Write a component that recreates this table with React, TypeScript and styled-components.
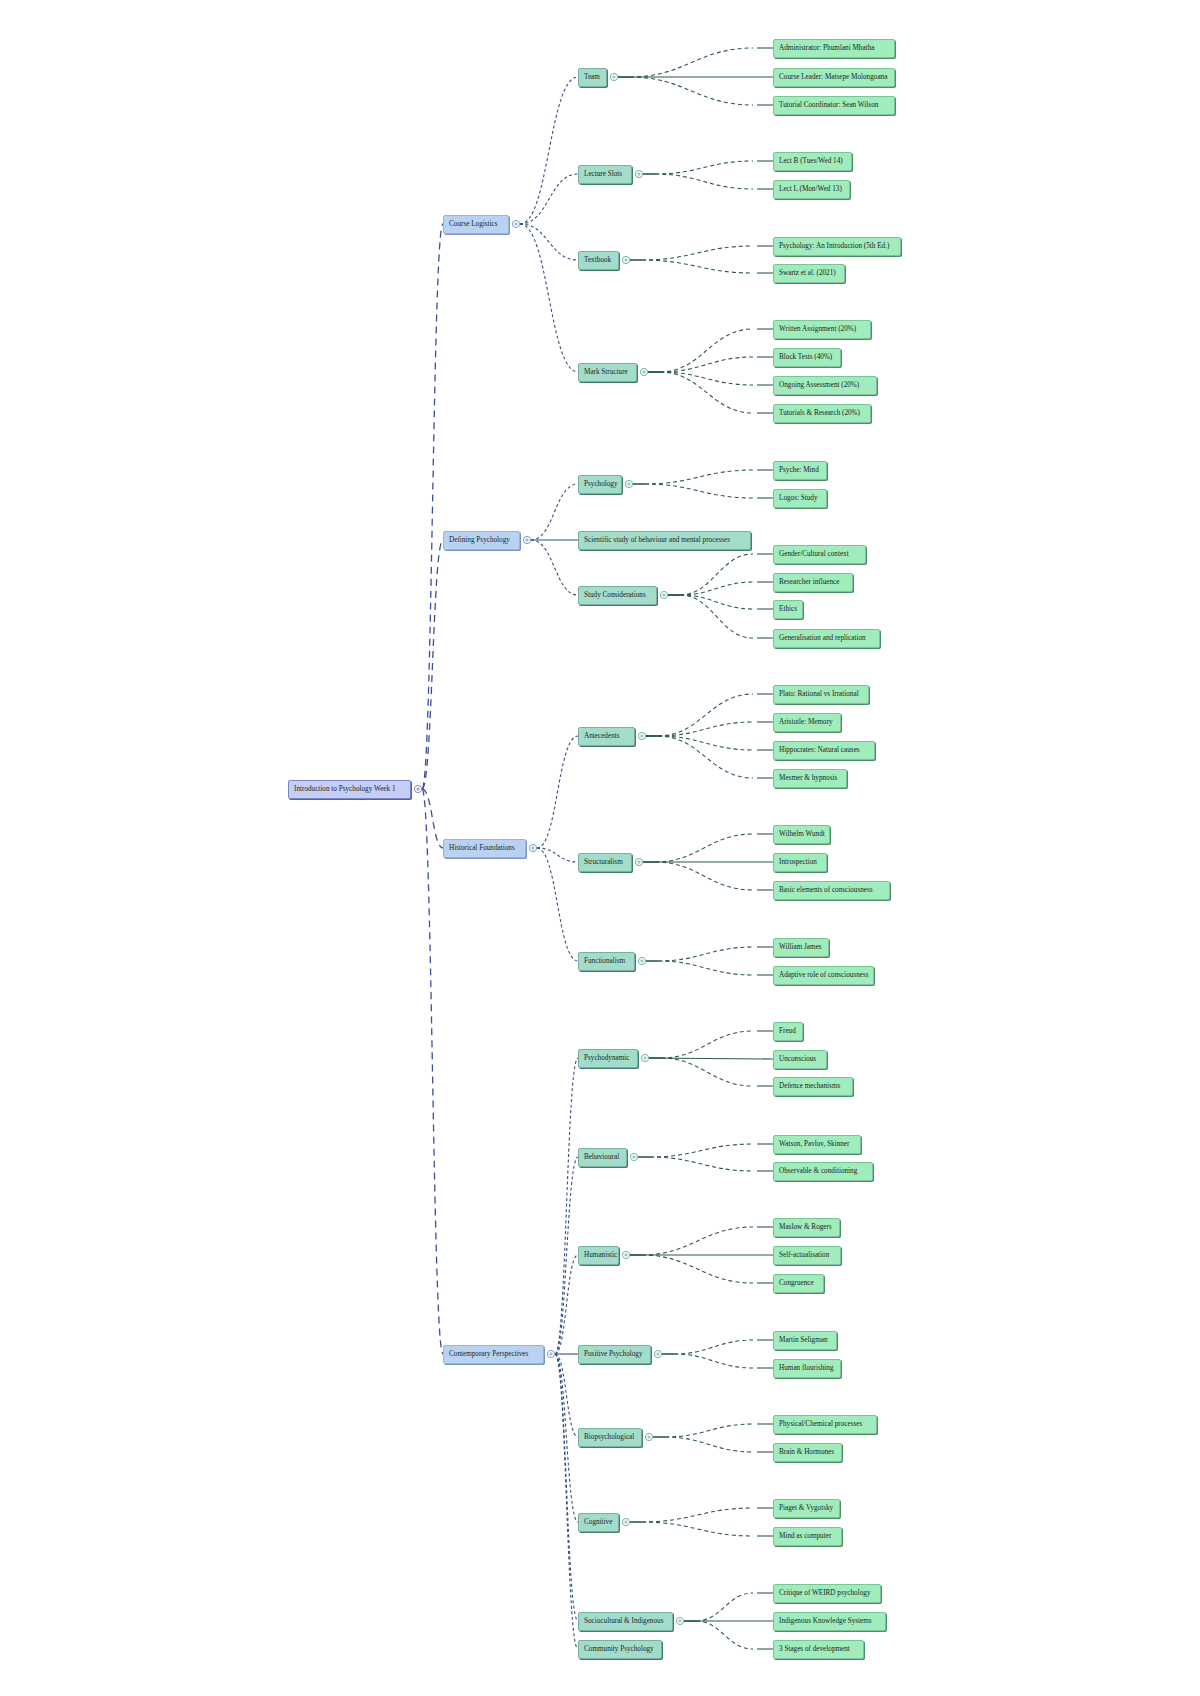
import React from "react";
import styled, { createGlobalStyle } from "styled-components";

// mind map: Introduction to Psychology, week 1

type MapNode = { label: string; cy: number; w: number; children?: MapNode[] };

const leaf = (label: string, cy: number, w: number): MapNode => ({ label, cy, w });

const tree: MapNode = {
  label: "Introduction to Psychology Week 1",
  cy: 789,
  w: 123,
  children: [
    {
      label: "Course Logistics",
      cy: 224,
      w: 66,
      children: [
        {
          label: "Team",
          cy: 77,
          w: 29,
          children: [
            leaf("Administrator: Phumlani Mbatha", 48, 122),
            leaf("Course Leader: Matsepe Molongoana", 77, 122),
            leaf("Tutorial Coordinator: Sean Wilson", 105, 122),
          ],
        },
        {
          label: "Lecture Slots",
          cy: 174,
          w: 54,
          children: [leaf("Lect B (Tues/Wed 14)", 161, 79), leaf("Lect L (Mon/Wed 13)", 189, 77)],
        },
        {
          label: "Textbook",
          cy: 260,
          w: 41,
          children: [
            leaf("Psychology: An Introduction (5th Ed.)", 246, 128),
            leaf("Swartz et al. (2021)", 273, 72),
          ],
        },
        {
          label: "Mark Structure",
          cy: 372,
          w: 59,
          children: [
            leaf("Written Assignment (20%)", 329, 98),
            leaf("Block Tests (40%)", 357, 68),
            leaf("Ongoing Assessment (20%)", 385, 104),
            leaf("Tutorials & Research (20%)", 413, 98),
          ],
        },
      ],
    },
    {
      label: "Defining Psychology",
      cy: 540,
      w: 77,
      children: [
        {
          label: "Psychology",
          cy: 484,
          w: 44,
          children: [leaf("Psyche: Mind", 470, 54), leaf("Logos: Study", 498, 54)],
        },
        leaf("Scientific study of behaviour and mental processes", 540, 173),
        {
          label: "Study Considerations",
          cy: 595,
          w: 79,
          children: [
            leaf("Gender/Cultural context", 554, 93),
            leaf("Researcher influence", 582, 80),
            leaf("Ethics", 609, 30),
            leaf("Generalisation and replication", 638, 107),
          ],
        },
      ],
    },
    {
      label: "Historical Foundations",
      cy: 848,
      w: 83,
      children: [
        {
          label: "Antecedents",
          cy: 736,
          w: 57,
          children: [
            leaf("Plato: Rational vs Irrational", 694, 96),
            leaf("Aristotle: Memory", 722, 68),
            leaf("Hippocrates: Natural causes", 750, 102),
            leaf("Mesmer & hypnosis", 778, 74),
          ],
        },
        {
          label: "Structuralism",
          cy: 862,
          w: 54,
          children: [
            leaf("Wilhelm Wundt", 834, 57),
            leaf("Introspection", 862, 54),
            leaf("Basic elements of consciousness", 890, 117),
          ],
        },
        {
          label: "Functionalism",
          cy: 961,
          w: 57,
          children: [leaf("William James", 947, 56), leaf("Adaptive role of consciousness", 975, 101)],
        },
      ],
    },
    {
      label: "Contemporary Perspectives",
      cy: 1354,
      w: 101,
      children: [
        {
          label: "Psychodynamic",
          cy: 1058,
          w: 60,
          children: [leaf("Freud", 1031, 30), leaf("Unconscious", 1059, 54), leaf("Defence mechanisms", 1086, 80)],
        },
        {
          label: "Behavioural",
          cy: 1157,
          w: 49,
          children: [leaf("Watson, Pavlov, Skinner", 1144, 88), leaf("Observable & conditioning", 1171, 100)],
        },
        {
          label: "Humanistic",
          cy: 1255,
          w: 41,
          children: [leaf("Maslow & Rogers", 1227, 67), leaf("Self-actualisation", 1255, 68), leaf("Congruence", 1283, 51)],
        },
        {
          label: "Positive Psychology",
          cy: 1354,
          w: 73,
          children: [leaf("Martin Seligman", 1340, 64), leaf("Human flourishing", 1368, 68)],
        },
        {
          label: "Biopsychological",
          cy: 1437,
          w: 64,
          children: [leaf("Physical/Chemical processes", 1424, 104), leaf("Brain & Hormones", 1452, 69)],
        },
        {
          label: "Cognitive",
          cy: 1522,
          w: 41,
          children: [leaf("Piaget & Vygotsky", 1508, 67), leaf("Mind as computer", 1536, 69)],
        },
        {
          label: "Sociocultural & Indigenous",
          cy: 1621,
          w: 95,
          children: [
            leaf("Critique of WEIRD psychology", 1593, 108),
            leaf("Indigenous Knowledge Systems", 1621, 113),
            leaf("3 Stages of development", 1649, 91),
          ],
        },
        leaf("Community Psychology", 1649, 84),
      ],
    },
  ],
};

// column of each depth
const LEVEL_X = [288, 443, 578, 773];
const BOX_H = 19;
const EXP_GAP = 7;

const palette = [
  { fill: "#c5cef8", border: "#7a85c6", shade: "#55619f", dot: "#7b8bd0", line: "#3c4d9c" },
  { fill: "#b9d2f1", border: "#9cb4d8", shade: "#7894bf", dot: "#7d98c8", line: "#35507f" },
  { fill: "#a4dccb", border: "#77b09c", shade: "#467e6c", dot: "#6fb4a0", line: "#2d5a4d" },
  { fill: "#a0ecbd", border: "#7cc497", shade: "#4f8d67", dot: "#6fb4a0", line: "#2d5a4d" },
];

const GlobalStyle = createGlobalStyle`
  html, body { margin: 0; padding: 0; background: #ffffff; }
  body { font-family: "Liberation Serif", "Times New Roman", serif; }
`;

const Canvas = styled.div`
  position: relative;
  width: 1200px;
  height: 1696px;
  overflow: hidden;
  background: #ffffff;
`;

const EdgeLayer = styled.svg`
  position: absolute;
  left: 0;
  top: 0;
`;

const NodeBox = styled.div<{ $level: number }>`
  position: absolute;
  height: ${BOX_H}px;
  box-sizing: border-box;
  padding: 0 5px;
  display: flex;
  align-items: center;
  font-size: 7.2px;
  color: #1b2624;
  white-space: nowrap;
  overflow: hidden;
  border-radius: 2px;
  background: ${(p) => palette[p.$level].fill};
  border: 1px solid ${(p) => palette[p.$level].border};
  box-shadow: 1px 1px 0 ${(p) => palette[p.$level].shade};
`;

const Expander = styled.svg`
  position: absolute;
  width: 10px;
  height: 10px;
  overflow: visible;
`;

type Placed = { node: MapNode; level: number; x: number };
type Edge = { d: string; level: number; dashed: boolean };

function place(node: MapNode, level: number, out: Placed[]) {
  out.push({ node, level, x: LEVEL_X[level] });
  node.children?.forEach((c) => place(c, level + 1, out));
}

function edgesOf(node: MapNode, level: number, out: Edge[]) {
  if (!node.children) return;
  const ex = LEVEL_X[level] + node.w + EXP_GAP;
  const y1 = node.cy;
  const x2 = LEVEL_X[level + 1];
  node.children.forEach((c) => {
    const y2 = c.cy;
    if (Math.abs(y2 - y1) < 2) {
      out.push({ d: `M${ex + 4},${y1} L${x2},${y2}`, level, dashed: false });
    } else if (level < 2) {
      const xm = (ex + 4 + x2) / 2;
      out.push({ d: `M${ex + 4},${y1} C${xm},${y1} ${xm},${y2} ${x2},${y2}`, level, dashed: true });
    } else {
      // solid stub, dashed swoop, solid stub into the leaf
      const a = ex + 16;
      const b = x2 - 20;
      const k = (b - a) * 0.45;
      out.push({ d: `M${ex + 4},${y1} L${a},${y1}`, level, dashed: false });
      out.push({ d: `M${a},${y1} C${a + k},${y1} ${b - k},${y2} ${b},${y2}`, level, dashed: true });
      out.push({ d: `M${b + 4},${y2} L${x2},${y2}`, level, dashed: false });
    }
    edgesOf(c, level + 1, out);
  });
}

const dashFor = (level: number) => (level === 0 ? "7 5" : level === 1 ? "3 2.5" : "4 3");

const App = () => {
  const nodes: Placed[] = [];
  place(tree, 0, nodes);
  const edges: Edge[] = [];
  edgesOf(tree, 0, edges);

  return (
    <Canvas>
      <GlobalStyle />
      <EdgeLayer width={1200} height={1696}>
        {edges.map((e, i) => (
          <path
            key={i}
            d={e.d}
            fill="none"
            stroke={palette[e.level].line}
            strokeWidth={e.level === 0 ? 1.3 : 1.1}
            strokeDasharray={e.dashed ? dashFor(e.level) : undefined}
          />
        ))}
      </EdgeLayer>
      {nodes.map(({ node, level, x }, i) => (
        <React.Fragment key={i}>
          <NodeBox $level={level} style={{ left: x, top: node.cy - BOX_H / 2, width: node.w }}>
            {node.label}
          </NodeBox>
          {node.children && (
            <Expander
              viewBox="0 0 10 10"
              style={{ left: x + node.w + EXP_GAP - 5, top: node.cy - 5 }}
            >
              <circle cx="5" cy="5" r="3.6" fill="#ffffff" stroke={palette[level].dot} strokeWidth="1" />
              <path d="M3.2 5h3.6M5 3.2v3.6" stroke={palette[level].dot} strokeWidth="0.9" />
            </Expander>
          )}
        </React.Fragment>
      ))}
    </Canvas>
  );
};

export default App;
